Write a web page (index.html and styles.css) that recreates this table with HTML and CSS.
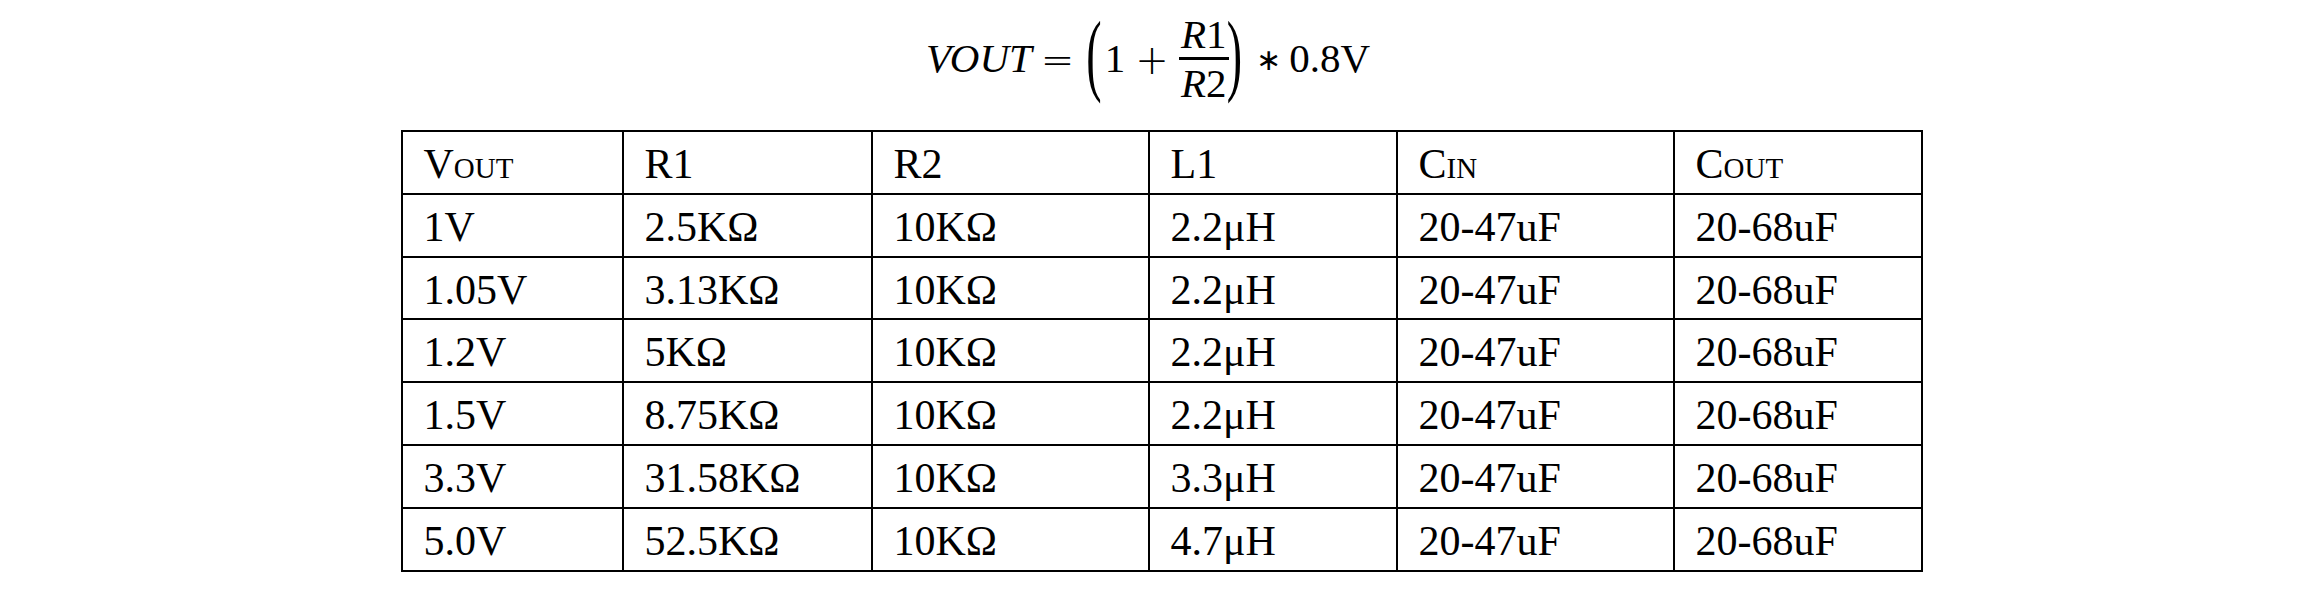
FILE: index.html
```html
<!DOCTYPE html>
<html>
<head>
<meta charset="utf-8">
<link rel="stylesheet" href="styles.css">
</head>
<body>
<div class="eq">
  <span class="mi">VOUT</span>
  <span class="op eqsign">=</span>
  <span class="paren lp">(</span>
  <span class="num one">1</span>
  <span class="op plus">+</span>
  <span class="frac">
    <span class="fn"><i>R</i>1</span>
    <span class="fd"><i>R</i>2</span>
  </span>
  <span class="paren rp">)</span>
  <span class="op ast">∗</span>
  <span class="num val">0.8V</span>
</div>
<table class="tbl">
  <colgroup>
    <col class="c1"><col class="c2"><col class="c3"><col class="c4"><col class="c5"><col class="c6">
  </colgroup>
  <tr class="head"><td>Vout</td><td>R1</td><td>R2</td><td>L1</td><td>Cin</td><td>Cout</td></tr>
  <tr><td>1V</td><td>2.5KΩ</td><td>10KΩ</td><td>2.2μH</td><td>20-47uF</td><td>20-68uF</td></tr>
  <tr><td>1.05V</td><td>3.13KΩ</td><td>10KΩ</td><td>2.2μH</td><td>20-47uF</td><td>20-68uF</td></tr>
  <tr><td>1.2V</td><td>5KΩ</td><td>10KΩ</td><td>2.2μH</td><td>20-47uF</td><td>20-68uF</td></tr>
  <tr><td>1.5V</td><td>8.75KΩ</td><td>10KΩ</td><td>2.2μH</td><td>20-47uF</td><td>20-68uF</td></tr>
  <tr><td>3.3V</td><td>31.58KΩ</td><td>10KΩ</td><td>3.3μH</td><td>20-47uF</td><td>20-68uF</td></tr>
  <tr><td>5.0V</td><td>52.5KΩ</td><td>10KΩ</td><td>4.7μH</td><td>20-47uF</td><td>20-68uF</td></tr>
</table>
<div class="wm">PWCHIP</div>
</body>
</html>
```
FILE: styles.css
```css
html, body {
  margin: 0;
  padding: 0;
  background: #fff;
  color: #000;
}
body {
  font-family: "Liberation Serif", "Times New Roman", serif;
  width: 2323px;
  height: 613px;
  overflow: hidden;
  position: relative;
}
.eq {
  height: 120px;
  display: flex;
  justify-content: center;
  align-items: center;
  padding-right: 27px;
  box-sizing: border-box;
}
.mi {
  font-style: italic;
  font-size: 41px;
  padding-bottom: 5px;
}
.num {
  font-size: 41px;
  padding-bottom: 5px;
}
.op {
  font-family: "DejaVu Sans", sans-serif;
  font-size: 40px;
  font-weight: 300;
}
.eqsign { margin-left: 9px; }
.paren {
  font-size: 46px;
  display: inline-block;
  transform: translateY(-8px) scaleY(2);
}
.lp { margin-left: 12px; }
.one { margin-left: 3px; }
.plus { margin-left: 10px; }
.frac {
  display: flex;
  flex-direction: column;
  align-items: center;
  margin-left: 10px;
  width: 50px;
  font-size: 41px;
  line-height: 40px;
}
.frac i { font-style: italic; }
.fn {
  align-self: stretch;
  text-align: center;
  padding-bottom: 3px;
  border-bottom: 3px solid #000;
}
.fd {
  padding-top: 3px;
  padding-bottom: 3px;
}
.rp { margin-left: -2px; }
.ast {
  margin-left: 14px;
  font-size: 30px;
  font-weight: normal;
  padding-bottom: 2px;
}
.val { margin-left: 8px; }

.tbl {
  border-collapse: collapse;
  table-layout: fixed;
  width: 1520px;
  margin: 10px auto 0;
  font-size: 42px;
  line-height: 48px;
}
.c1 { width: 221px; }
.c2 { width: 249px; }
.c3 { width: 277px; }
.c4 { width: 248px; }
.c5 { width: 277px; }
.c6 { width: 248px; }
.tbl td {
  border: 2px solid #000;
  padding: 8px 0 4.8px 21px;
  white-space: nowrap;
  vertical-align: top;
}
.head td {
  font-variant: small-caps;
}
.wm {
  position: absolute;
  left: 1129px;
  top: 297px;
  font-family: "Liberation Sans", Arial, sans-serif;
  font-size: 17px;
  color: #ececec;
  z-index: -1;
}
```
